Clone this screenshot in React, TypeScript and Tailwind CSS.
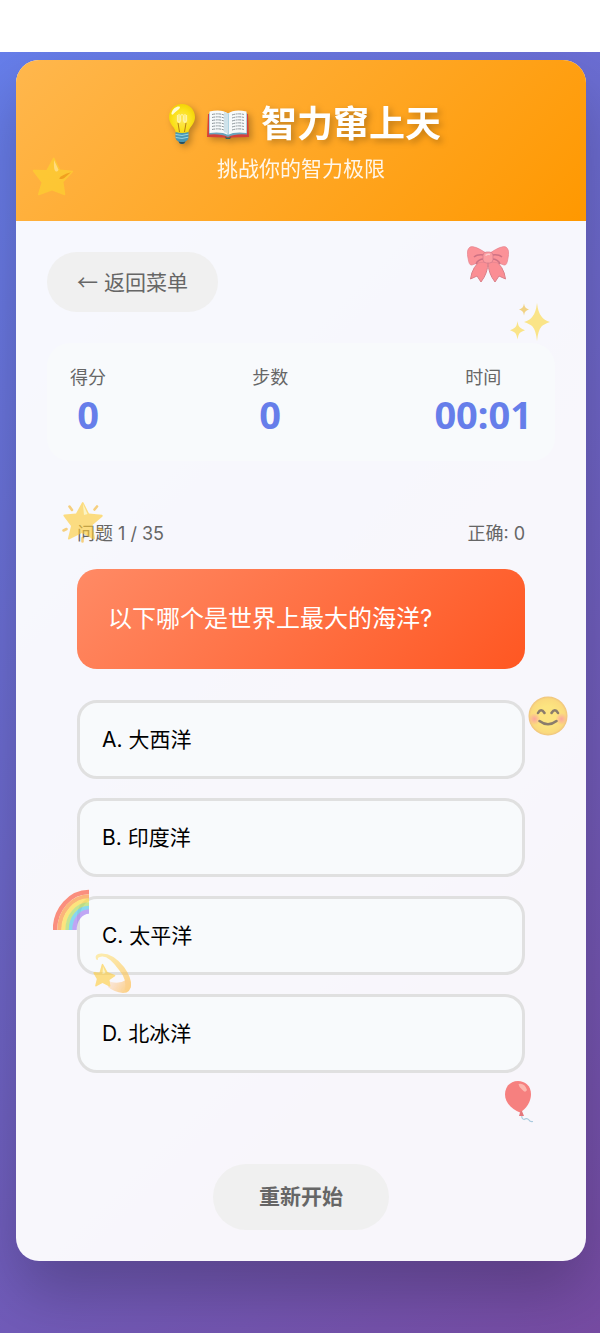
import { useState } from "react";
import type { ReactNode } from "react";

const OPTIONS = ["A. 大西洋", "B. 印度洋", "C. 太平洋", "D. 北冰洋"];

const STATS = [
  { label: "得分", value: "0" },
  { label: "步数", value: "0" },
  { label: "时间", value: "00:01" },
];

const Bulb = () => (
  <svg viewBox="0 0 26 40" className="w-[26px] h-10 mx-2" aria-hidden="true">
    <defs>
      <radialGradient id="bulb" cx="0.5" cy="0.55" r="0.6">
        <stop offset="0" stopColor="#ffe75a" />
        <stop offset="0.6" stopColor="#fbe11b" />
        <stop offset="1" stopColor="#f1cf00" />
      </radialGradient>
    </defs>
    <path d="M13 0C5.500 0 0 5.700 0 13c0 5 2.600 7.800 4.600 10.500C6 25.400 6.500 27 6.700 29h12.600c.2-2 .7-3.600 2.100-5.500C23.400 20.800 26 18 26 13 26 5.700 20.500 0 13 0Z" fill="url(#bulb)" />
    <path d="m10.500 28-1.500-9m6.500 9 1.500-9" stroke="#b77d16" strokeWidth="1" fill="none" />
    <path d="M8.500 11v6q2 3 3-.5V12q1.500-3 3 0v4.500q1 3.500 3 .5v-6M10 10v8m6-8v8" stroke="#fff3a3" strokeWidth="1.200" fill="none" />
    <path d="M2.500 9C4 4 8 2 10.500 2.600c1 .8.300 2-1.200 3.200C7 7.500 5 9.500 4 10.500 3 11 2.300 10.300 2.500 9Z" fill="#fffbd0" />
    <path d="M6.500 28q6.500 2 13 0v6q-.5 3-3 3.500Q15.500 40 13 40t-3.500-2.500Q7 37 6.500 34Z" fill="#4a97b3" />
    <path d="M6.500 30.500q6.500 2 13-.3M6.700 33.500q6.300 2 12.600-.3" stroke="#9bd6e3" strokeWidth="1" fill="none" />
    <path d="M9.500 37.500q3.500 1 7 0Q15.500 40 13 40t-3.500-2.500Z" fill="#29505f" />
  </svg>
);

const Book = () => (
  <svg viewBox="0 0 42 29" className="w-[42px] h-[29px] ml-1" aria-hidden="true">
    <path d="M1 4 0 27l17 .5q4 3 8 0L42 27 41 4Z" fill="#d5403c" />
    <path d="M2 3v21.500q12-1 19 2.500 7-3.500 19-2.500V3Z" fill="#6aa5bd" />
    <path d="M2.500 1.500Q15-1 21 3.500 27-1 39.500 1.500V23Q27 21.500 21 25 15 21.500 2.500 23Z" fill="#f7fafb" />
    <path d="M21 3.500V25" stroke="#7fb9d0" strokeWidth="1.200" />
    <path d="M17 2q3 .5 4 2v20q-1.500-1.500-4-2Z" fill="#cfe2ea" />
    <path
      d="M5 4.500q7-1.500 12 .5M5 7.500q7-1.500 12 .5M5 10.500q7-1.500 12 .5M5 13.500q7-1.500 12 .5M5 16.500q7-1.500 12 .5M5 19.500q7-1.500 12 .5M25 5q6-2 12-.5M25 8q6-2 12-.5M25 11q6-2 12-.5M25 14q6-2 12-.5M25 17q6-2 12-.5M25 20q6-2 12-.5"
      stroke="#8b9499"
      strokeWidth="1"
      strokeDasharray="3 .7 2 .6"
      fill="none"
    />
    <path d="M18 26.500q3 2.500 6 0l-1 2.500h-4Z" fill="#2f6e58" />
  </svg>
);

const Star = () => (
  <svg viewBox="0 0 42 40" className="w-[42px] h-10">
    <path d="M22.500 1 28 12.500l12.500 1.200q1 .5.200 1.500L31.500 25l1.800 12.300q-.3 1.400-1.500.8L20 33.500 7 38.300q-1.400.2-1-1L9.500 25.500.8 14q-.3-1.300 1-1.300l12.700.3 6.500-12Q21.800 0 22.500 1Z" fill="#fdd62f" />
    <path d="m22 3 4.500 9.700q-.5 2.500-3 1.500-2-1-1.500-11.200Z" fill="#fff8a8" />
    <path d="m39 15.300-7 6q-2.500 1.500-5 .1 3-3.800 12-6.100Z" fill="#e9960e" />
  </svg>
);

const Bow = () => (
  <svg viewBox="0 0 42 38" className="w-[42px] h-[38px]">
    <path d="M16 13Q5 20 3.500 33l6.500-3 4 6q7-9 7-20ZM26 13q11 7 12.500 20l-6.500-3-4 6q-7-9-7-20Z" fill="#ff4a50" stroke="#c5303b" strokeWidth="1" />
    <path d="M19 7Q7-1 3 1-1 4 1 12q1 8 4 7 6-3 14-3ZM23 7q12-8 16-6 4 3 2 11-1 8-4 7-6-3-14-3Z" fill="#ff5056" stroke="#d93a46" strokeWidth=".7" />
    <path d="M17 9q-7-1-10 2m10 2q-6 0-8 5M25 9q7-1 10 2m-10 2q6 0 8 5" stroke="#b31b35" strokeWidth="1.600" fill="none" />
    <rect x="16" y="6" width="10" height="11" rx="3.500" fill="#ff6064" stroke="#b9253d" strokeWidth=".7" />
    <path d="M18.500 9.500q2-2 4.500-1" stroke="#ffb0ae" strokeWidth="1.500" fill="none" />
  </svg>
);

const Sparkles = () => (
  <svg viewBox="0 0 40 38" className="w-10 h-[38px]" fill="#fcd83c">
    <path d="M27 0q1.200 10 4.500 13.500Q34 17 40 19q-6 2-8.500 4.500Q28 27.500 27 38q-1-10.500-4.500-14.500Q20 21 14 19q6-2 8.500-5.500Q25.800 10 27 0Z" />
    <path d="M7.500 18q.6 5 2.500 6.500t5 2.700q-3.500 1-5 2.500-1.700 1.500-2.500 6.800-.8-5.300-2.500-6.800-1.500-1.500-5-2.500 3.100-1.200 5-2.700T7.500 18Z" />
    <path d="M14 .5q.4 3 1.700 4.200Q17 5.800 19 6.500q-2 .6-3.300 1.700T14 12.500q-.4-3.200-1.700-4.300T9 6.500q2-.7 3.300-1.800T14 .5Z" fill="#eebb35" />
  </svg>
);

const GlowStar = () => (
  <svg viewBox="0 0 42 42" className="w-[42px] h-[42px]">
    <path d="M21.500 1.500 27 12.500l13 1.200q1.300.8.300 2L30.500 24l2.500 13.500q-.5 1.500-1.800.8L20 32 7 38.500q-1.400.2-1-1.200L9 25 1.500 15q-.5-1.500 1-1.500L14 12.500l6-11q.8-1.200 1.500 0Z" fill="#ffcb30" />
    <path d="m21 3 4.500 10-3.500 1Z" fill="#fff3a0" />
    <path d="m7.500 5.500 2.500 3.500M35 5.500l-2.500 3M1.500 29.500l3-1.500M37 27.500l3 1.500M20.500 37v3.500" stroke="#f5b52c" strokeWidth="2.600" strokeLinecap="round" />
  </svg>
);

const Smile = () => (
  <svg viewBox="0 0 40 40" className="w-10 h-10">
    <defs>
      <radialGradient id="face">
        <stop offset="0.5" stopColor="#ffd92e" />
        <stop offset="0.88" stopColor="#fcc72b" />
        <stop offset="1" stopColor="#e9a02a" />
      </radialGradient>
      <radialGradient id="cheek">
        <stop offset="0" stopColor="#ff7060" />
        <stop offset="1" stopColor="#ff7060" stopOpacity="0" />
      </radialGradient>
    </defs>
    <circle cx="20" cy="20" r="19.500" fill="url(#face)" />
    <circle cx="6.500" cy="23" r="6" fill="url(#cheek)" />
    <circle cx="33.500" cy="23" r="6" fill="url(#cheek)" />
    <path d="M10 17q3-5.500 6.500 0M23.500 17q3.500-5.500 6.500 0M11.500 25q8.500 6.500 17 0" stroke="#422b0d" strokeWidth="2.600" strokeLinecap="round" fill="none" />
  </svg>
);

const RAINBOW_BANDS = [
  { r: 34, color: "#fc4a2c" },
  { r: 29.5, color: "#fd8a24" },
  { r: 25.500, color: "#ffd92c" },
  { r: 21.500, color: "#a4d94b" },
  { r: 18, color: "#3ec3e8" },
  { r: 14.5, color: "#9a70f0" },
];

const Rainbow = () => (
  <svg viewBox="0 0 36 41" className="w-9 h-[41px]">
    {RAINBOW_BANDS.map((band) => (
      <path key={band.color} d={`M${36 - band.r} 41A${band.r} ${band.r + 4} 0 0 1 36 ${37 - band.r}`} stroke={band.color} strokeWidth="4.500" fill="none" />
    ))}
  </svg>
);

const Dizzy = () => (
  <svg viewBox="0 0 40 40" className="w-10 h-10">
    <defs>
      <linearGradient id="trail" x1="0.2" y1="0" x2="0.8" y2="1">
        <stop offset="0" stopColor="#ffe27a" />
        <stop offset="1" stopColor="#ffb93c" />
      </linearGradient>
      <linearGradient id="tail" x1="0" y1="0" x2="1" y2="0.4">
        <stop offset="0" stopColor="#ffb070" stopOpacity="0.3" />
        <stop offset="1" stopColor="#ffb93c" />
      </linearGradient>
    </defs>
    <path d="M3 6Q1 1 8 .5 20 0 31 14q8 11 7 19-1 5-6 4 2-11-6-20Q16 3 9 3.500 4 4 5 6.500 4 7.500 3 6Z" fill="url(#trail)" />
    <path d="M15 28q10 4 18-1 4 0 5 4 0 9-8 9-9-1-15-6Z" fill="url(#tail)" />
    <path d="m10 11 4.500 8 7.500 3q.8.500 0 1.200L16.500 27l1 6q-.3 1-1.200.6L9.500 30 3 33.500q-1 0-.8-1l1.600-6.500-3.500-6q0-1 1-1l5.200.5 2.300-8.300q.6-1 1.200-.2Z" fill="#ffcc38" />
    <path d="m10 13.500 2.500 6.500-3 1Z" fill="#fff0a0" />
  </svg>
);

const Balloon = () => (
  <svg viewBox="0 0 30 42" className="w-[30px] h-[42px]">
    <path d="M18 33q-1 5 2 5.500 3-2 5 .5 1 2 4 1.500" stroke="#77aecb" strokeWidth="1.200" fill="none" />
    <path d="M14 0C6 0 1 6 1 13.500 1 22 9 29 16 31.500 22 28 27 21 27 13 27 5 21 0 14 0Z" fill="#f6322e" />
    <path d="m16.500 30-1.500 5h5l-2-5Z" fill="#d82429" />
    <path d="M14.500 3q6-1.500 8.500 6-2 3.500-5-.500-3-2-3.500-5.500Z" fill="#ff8c7c" />
  </svg>
);

interface Floater {
  id: string;
  place: string;
  icon: ReactNode;
}

const FLOATERS: Floater[] = [
  { id: "star", place: "left-8 top-[157px]", icon: <Star /> },
  { id: "bow", place: "right-[91px] top-[246px]", icon: <Bow /> },
  { id: "sparkles", place: "right-[50px] top-[303px]", icon: <Sparkles /> },
  { id: "glow", place: "left-[62px] top-[501px]", icon: <GlowStar /> },
  { id: "smile", place: "right-8 top-[696px]", icon: <Smile /> },
  { id: "rainbow", place: "left-[53px] top-[889px]", icon: <Rainbow /> },
  { id: "dizzy", place: "left-[93px] top-[953px]", icon: <Dizzy /> },
  { id: "balloon", place: "right-[66px] top-[1081px]", icon: <Balloon /> },
];

export default function App() {
  const [selected, setSelected] = useState<number | null>(null);

  return (
    <div className="relative flex min-h-screen flex-col bg-white pt-[52px] font-['Inter','Noto_Sans_CJK_SC',sans-serif]">
      <div className="flex-1 overflow-hidden bg-[linear-gradient(135deg,#667eea_0%,#764ba2_100%)] pt-2 pr-3.5 pb-[72px] pl-4">
        <div className="overflow-hidden rounded-[23px] bg-white/95 shadow-[0_31px_62px_rgba(0,0,0,0.22)]">
          <header className="flex flex-col items-center bg-[linear-gradient(135deg,#ffb74d,#ff9800)] px-8 pt-9 pb-9 text-white">
            <h1 className="flex items-center text-[36px] leading-[56px] font-bold drop-shadow-[3px_3px_3px_rgba(0,0,0,0.25)]">
              <Bulb />
              <Book />
              <span className="ml-3">智力窜上天</span>
            </h1>
            <p className="text-[21px] leading-[33px] opacity-90">挑战你的智力极限</p>
          </header>

          <main className="p-[31px]">
            <button className="block cursor-pointer rounded-full bg-[#f0f0f0] px-[30px] text-[21px] leading-[59px] text-[#666]">
              <span className="font-['Noto_Sans_CJK_SC',sans-serif]">←</span> 返回菜单
            </button>

            <div className="mt-[31px] flex justify-between rounded-[23px] bg-[#f8fafc] p-[23px] text-center">
              {STATS.map((stat) => (
                <div key={stat.label}>
                  <div className="text-lg leading-6 text-[#666]">{stat.label}</div>
                  <div className="font-['Noto_Sans',sans-serif] text-[38px] leading-[48px] font-bold text-[#667eea]">{stat.value}</div>
                </div>
              ))}
            </div>

            <section className="mt-[31px] px-[30px] py-[31px]">
              <div className="mb-6 flex justify-between text-lg leading-[22px] text-[#666]">
                <span>问题 1 / 35</span>
                <span>正确: 0</span>
              </div>
              <h2 className="mb-[31px] rounded-[20px] bg-[linear-gradient(135deg,#ff8a65,#ff5722)] p-[31px] text-2xl leading-[38px] font-normal text-white">
                以下哪个是世界上最大的海洋?
              </h2>
              <div className="flex flex-col gap-[19px]">
                {OPTIONS.map((option, i) => (
                  <button
                    key={option}
                    onClick={() => setSelected(i)}
                    className={`w-full cursor-pointer rounded-[20px] border-3 bg-[#f8fafc] px-[22px] text-left text-[21px] leading-[73px] text-black ${selected === i ? "border-[#667eea]" : "border-[#e0e0e0]"}`}
                  >
                    {option}
                  </button>
                ))}
              </div>
            </section>

            <div className="mt-[60px] flex justify-center">
              <button onClick={() => setSelected(null)} className="cursor-pointer rounded-full bg-[#f0f0f0] px-[46px] text-[21px] leading-[66px] font-bold text-[#666]">
                重新开始
              </button>
            </div>
          </main>
        </div>
      </div>

      {FLOATERS.map((item) => (
        <div key={item.id} className={`pointer-events-none absolute opacity-60 ${item.place}`} aria-hidden="true">
          {item.icon}
        </div>
      ))}
    </div>
  );
}
